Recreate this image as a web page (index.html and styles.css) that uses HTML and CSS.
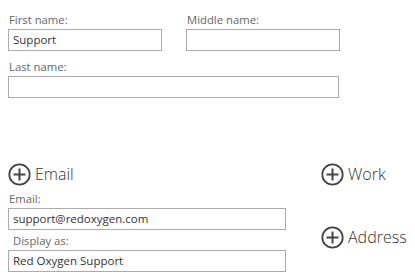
FILE: index.html
```html
<!DOCTYPE html>
<html>
<head>
<meta charset="utf-8">
<link rel="stylesheet" href="styles.css">
</head>
<body>
<div class="page">
  <div class="names">
    <div class="row">
      <div class="field">
        <div class="label">First name:</div>
        <div class="input short">Support</div>
      </div>
      <div class="field">
        <div class="label">Middle name:</div>
        <div class="input short"></div>
      </div>
    </div>
    <div class="field last">
      <div class="label">Last name:</div>
      <div class="input long"></div>
    </div>
  </div>
  <div class="contact">
    <div class="col-left">
      <div class="head">
        <svg class="plus" width="23" height="23" viewBox="0 0 23 23"><circle cx="11.5" cy="11.5" r="10.2" fill="none" stroke="#444" stroke-width="1.8"/><path d="M11.5 5.5v12M5.5 11.5h12" stroke="#444" stroke-width="2" fill="none"/></svg>
        <span class="head-text">Email</span>
      </div>
      <div class="field email-field">
        <div class="label">Email:</div>
        <div class="input wide">support@redoxygen.com</div>
      </div>
      <div class="field display-field">
        <div class="label indent">Display as:</div>
        <div class="input wide">Red Oxygen Support</div>
      </div>
    </div>
    <div class="col-right">
      <div class="head">
        <svg class="plus" width="23" height="23" viewBox="0 0 23 23"><circle cx="11.5" cy="11.5" r="10.2" fill="none" stroke="#444" stroke-width="1.8"/><path d="M11.5 5.5v12M5.5 11.5h12" stroke="#444" stroke-width="2" fill="none"/></svg>
        <span class="head-text">Work</span>
      </div>
      <div class="head address">
        <svg class="plus" width="23" height="23" viewBox="0 0 23 23"><circle cx="11.5" cy="11.5" r="10.2" fill="none" stroke="#444" stroke-width="1.8"/><path d="M11.5 5.5v12M5.5 11.5h12" stroke="#444" stroke-width="2" fill="none"/></svg>
        <span class="head-text">Address</span>
      </div>
    </div>
  </div>
</div>
</body>
</html>
```
FILE: styles.css
```css
html, body {
  margin: 0;
  padding: 0;
  background: #fff;
}
.page {
  font-family: "Open Sans", "Noto Sans", sans-serif;
  padding: 12px 0 0 8px;
  color: #333;
}
.names {
  display: flex;
  flex-direction: column;
  gap: 8px;
}
.row {
  display: flex;
  gap: 24px;
}
.field {
  display: flex;
  flex-direction: column;
}
.label {
  font-size: 11.3px;
  line-height: 15px;
  color: #666;
  padding-left: 1px;
  margin-bottom: 2px;
}
.label.indent {
  padding-left: 5px;
}
.input {
  box-sizing: border-box;
  height: 22px;
  border: 1px solid #ababab;
  font-size: 11.5px;
  line-height: 20px;
  padding-left: 4px;
  color: #333;
}
.short { width: 154px; }
.long { width: 331px; }
.wide { width: 278px; }
.contact {
  display: flex;
  margin-top: 64px;
  gap: 35px;
}
.head {
  display: flex;
  align-items: center;
  gap: 4px;
  height: 24px;
}
.head-text {
  font-size: 16px;
  font-weight: 300;
  color: #333;
}
.plus { display: block; }
.email-field { margin-top: 5px; }
.display-field { margin-top: 3px; }
.address { margin-top: 39px; }
```
